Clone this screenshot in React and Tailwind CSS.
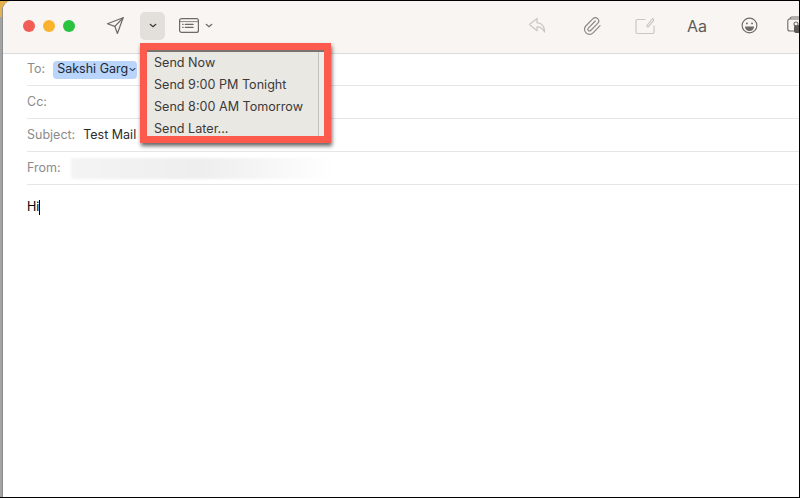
import React from 'react';
import { Paperclip } from 'lucide-react';

const Chevron = ({ className = '' }) => (
    <svg viewBox="0 0 10 6" className={className} fill="none" stroke="currentColor" strokeWidth="1.5" strokeLinecap="round" strokeLinejoin="round">
        <path d="M1.5 1.5 5 4.5l3.5-3" />
    </svg>
);

const SendIcon = () => (
    <svg viewBox="0 0 20 20" className="w-[19px] h-[19px] text-[#6d6a68]" fill="none" stroke="currentColor" strokeWidth="1.3" strokeLinejoin="round" strokeLinecap="round">
        <path d="M1.5 8.2 18 1.8 12 18.4 9.3 10.9 1.5 8.2Z" />
        <path d="M9.3 10.9 18 1.8" />
    </svg>
);

const ListIcon = () => (
    <svg viewBox="0 0 20 15" className="w-[20px] h-[15px] text-[#6d6a68]" fill="none" stroke="currentColor" strokeWidth="1.2" strokeLinecap="round">
        <rect x="0.6" y="0.6" width="18.8" height="13.8" rx="2" />
        <path d="M0.8 3.6h18.4" strokeWidth="0.8" />
        <path d="M3.6 6.3h.6M6.2 6.3h8M3.6 9.3h.6M6.2 9.3h8" />
    </svg>
);

const ReplyIcon = () => (
    <svg viewBox="0 0 20 18" className="w-[19px] h-[17px] text-[#c9c6c3]" fill="none" stroke="currentColor" strokeWidth="1.3" strokeLinejoin="round" strokeLinecap="round">
        <path d="M9.5 1.5 1.5 8l8 6.5v-4c3.5 0 6 1 8 5.5 0-5.5-2.5-9.5-8-10V1.5Z" />
    </svg>
);

const ComposeIcon = () => (
    <svg viewBox="0 0 20 18" className="w-[20px] h-[18px] text-[#c9c6c3]" fill="none" stroke="currentColor" strokeWidth="1.2" strokeLinecap="round" strokeLinejoin="round">
        <path d="M10 2.5H2.5a1.5 1.5 0 0 0-1.5 1.5v11a1.5 1.5 0 0 0 1.5 1.5h15A1.5 1.5 0 0 0 19 15v-6" />
        <path d="M17.5 1.5 12 8.5a1 1 0 0 0 1.5 1.2l5-6.2a1.4 1.4 0 0 0-1-2Z" />
    </svg>
);

const EmojiIcon = () => (
    <svg viewBox="0 0 18 18" className="w-[17px] h-[17px] text-[#6d6a68]" fill="none" stroke="currentColor" strokeWidth="1.2">
        <circle cx="9" cy="9" r="7.8" />
        <circle cx="6.3" cy="6.8" r="1" fill="currentColor" stroke="none" />
        <circle cx="11.7" cy="6.8" r="1" fill="currentColor" stroke="none" />
        <path d="M4.2 10h9.6a4.8 4.8 0 0 1-9.6 0Z" fill="currentColor" stroke="none" />
    </svg>
);

const PhotoIcon = () => (
    <svg viewBox="0 0 20 20" className="w-[20px] h-[20px] shrink-0 text-[#6d6a68]" fill="none" stroke="currentColor" strokeWidth="1.1">
        <rect x="3" y="1" width="15" height="12" rx="2" />
        <rect x="0.8" y="3" width="15" height="12" rx="2" fill="#f9f5f2" />
        <rect x="7" y="9" width="12" height="8" rx="2" fill="#5c5957" stroke="none" />
        <circle cx="9" cy="8" r="2" />
    </svg>
);

const Field = ({ label, children, height = 'h-[33px]' }) => (
    <div className={`${height} flex items-center border-b border-[#e6e6e6]`}>
        <span className="text-[#8b8b8b] mr-[8px]">{label}</span>
        {children}
    </div>
);

const MenuItem = ({ children }) => (
    <div className="h-[22px] leading-[22px] whitespace-nowrap">{children}</div>
);

const App = () => {
    return (
        <div className="relative w-[800px] h-[498px] overflow-hidden bg-black pt-px pr-px pb-px font-['Inter','Liberation_Sans',sans-serif] text-[12.5px] text-[#2b2b2b]">
            <div className="h-full bg-[linear-gradient(#e3b14d_0_16px,#a3a3a3_16px)] pl-0.5">
                <div className="h-full bg-white rounded-tl-[9px] overflow-hidden border-l border-[#8d8d8d]">
                    {/* toolbar */}
                    <div className="h-[53px] bg-[#f9f5f2] border-b border-[#dcdad8] flex items-center pl-[20px] pb-[3px]">
                        <div className="flex gap-2 w-[70px]">
                            <span className="w-3 h-3 rounded-full bg-[#f25b56]"></span>
                            <span className="w-3 h-3 rounded-full bg-[#fbb32d]"></span>
                            <span className="w-3 h-3 rounded-full bg-[#29c33f]"></span>
                        </div>
                        <div className="ml-[13px]"><SendIcon /></div>
                        <div className="ml-[15px] w-[25px] h-[28px] rounded-[5px] bg-[#e3dfdb] flex items-center justify-center">
                            <Chevron className="w-[8px] h-[5px] text-[#3c3c3c]" />
                        </div>
                        <div className="ml-[14px]"><ListIcon /></div>
                        <Chevron className="ml-[6px] w-[8px] h-[5px] text-[#6d6a68]" />
                        <div className="ml-auto flex items-center mr-[-8px]">
                            <ReplyIcon />
                            <div className="ml-[35px]"><Paperclip size={20} strokeWidth={1.4} className="text-[#8a8785]" /></div>
                            <div className="ml-[33px]"><ComposeIcon /></div>
                            <span className="ml-[32px] text-[16px] text-[#5e5c5a]">Aa</span>
                            <div className="ml-[34px]"><EmojiIcon /></div>
                            <div className="ml-[29px]"><PhotoIcon /></div>
                        </div>
                    </div>

                    {/* header fields */}
                    <div className="pl-[24px]">
                        <Field label="To:" height="h-[32px]">
                            <span className="h-[18px] pl-[4px] pr-[1px] rounded-[4px] bg-[#b9d5fb] flex items-center gap-[1px] text-[#1d2733]">
                                Sakshi Garg
                                <Chevron className="w-[7px] h-[5px] text-[#2a3a50]" />
                            </span>
                        </Field>
                        <Field label="Cc:" />
                        <Field label="Subject:">
                            <span>Test Mail</span>
                        </Field>
                        <div className="h-[33px] flex items-center border-b border-[#e6e6e6]">
                            <span className="text-[#8b8b8b] w-[44px]">From:</span>
                            <div className="w-[262px] h-[21px] bg-gradient-to-r from-[#f4f4f4] via-[#eeeeee] to-white blur-[1px]"></div>
                        </div>
                    </div>

                    {/* message body */}
                    <div className="pl-[24px] pt-[13px] flex items-center text-black">
                        <span>Hi</span>
                        <span className="w-px h-[15px] bg-black"></span>
                    </div>
                </div>
            </div>

            {/* send later menu with the red highlight box */}
            <div className="absolute left-[140px] top-[43px] w-[191px] h-[100px] border-[7px] border-[#fb5a4d] shadow-[1px_3px_4px_rgba(0,0,0,0.6)]">
                <div className="h-full flex bg-[#eae8e3] border-t-2 border-t-[#77736e]">
                    <div className="flex-1 overflow-hidden pl-[7px] text-[#3a3a3a] text-[12.6px]">
                        <MenuItem>Send Now</MenuItem>
                        <MenuItem>Send 9:00 PM Tonight</MenuItem>
                        <MenuItem>Send 8:00 AM Tomorrow</MenuItem>
                        <MenuItem>Send Later...</MenuItem>
                    </div>
                    <div className="w-[6px] border-l border-[#c4c2be] bg-[#eeece8]"></div>
                </div>
            </div>
        </div>
    );
};

export default App;
